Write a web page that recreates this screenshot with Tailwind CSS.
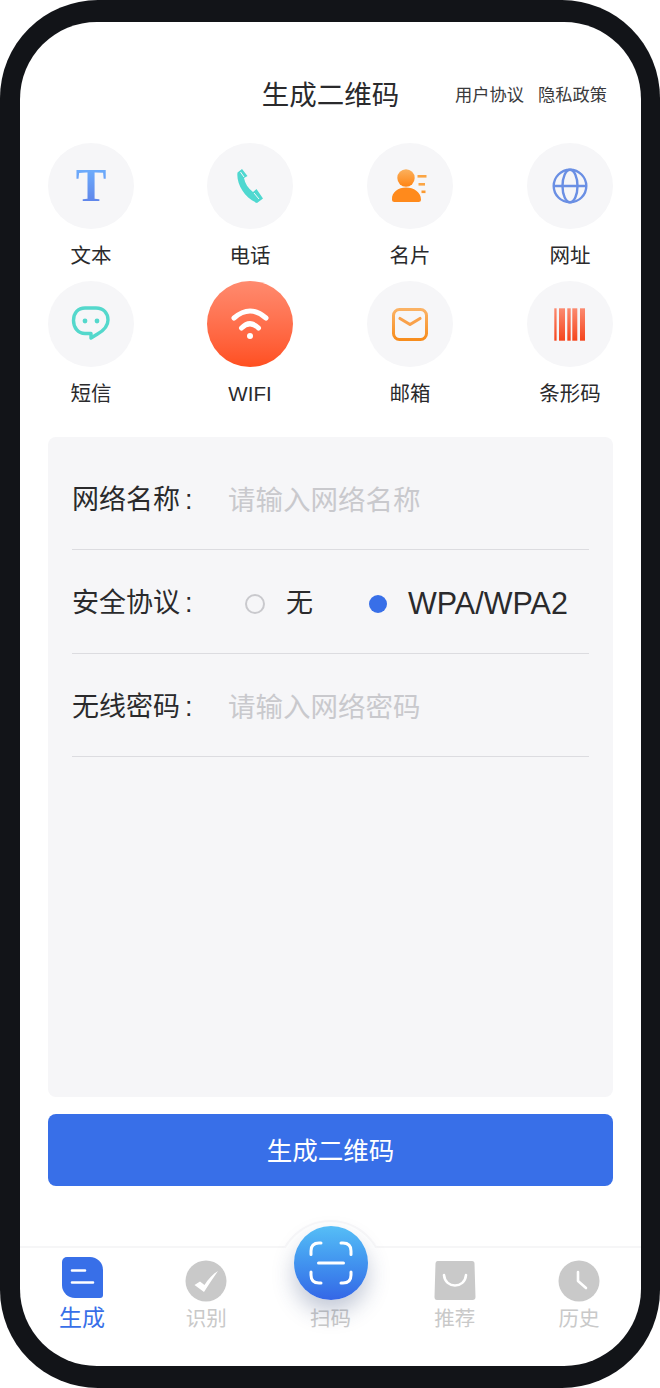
<!DOCTYPE html>
<html lang="zh-CN">
<head>
  <meta charset="UTF-8">
  <meta name="viewport" content="width=device-width, initial-scale=1">
  <title>生成二维码</title>
  <script src="https://cdn.jsdelivr.net/npm/@tailwindcss/browser@4"></script>
</head>
<body class="bg-white font-['Liberation_Sans','Noto_Sans_CJK_SC',sans-serif] text-[#2a2a2c]">

  <!-- 手机外框 -->
  <div class="w-[660px] h-[1388px] rounded-[98px] bg-[#121418] pt-[22px] pb-[22px] pl-[20px] pr-[19px]">
    <div class="h-full rounded-[77px] bg-white overflow-hidden flex flex-col">

      <!-- 标题栏 -->
      <div class="h-[121px] shrink-0 grid grid-cols-[1fr_auto_1fr] items-start pt-[57px]">
        <div></div>
        <div class="text-[27.5px] leading-[34px]">生成二维码</div>
        <div class="flex justify-end gap-[14px] pr-[34px] pt-[4px] text-[17.25px] leading-[24px] text-[#3a3a3c]">
          <span>用户协议</span>
          <span>隐私政策</span>
        </div>
      </div>

      <!-- 类型图标 -->
      <div class="px-[28px] shrink-0 flex flex-col">
        <div class="flex justify-between">
          <div class="w-[86px] flex flex-col items-center">
            <div class="w-[86px] h-[86px] rounded-full bg-[#f6f6f8] flex items-center justify-center">
              <span class="font-['Liberation_Serif',serif] font-bold text-[46px] leading-[46px] bg-gradient-to-b from-[#70b4ff] to-[#5c7ce6] bg-clip-text text-transparent">T</span>
            </div>
            <div class="h-[52px] flex items-center text-[20.5px] pt-[3px]">文本</div>
          </div>
          <div class="w-[86px] -ml-[1px] flex flex-col items-center">
            <div class="w-[86px] h-[86px] rounded-full bg-[#f6f6f8]">
              <svg width="86" height="86" viewBox="0 0 86 86">
                <path d="M35 26 L30.5 29.5 C29 40 37 55 50 60 L56 55.5 L49.5 46 L46 49 C41 45.5 38 40.5 37 35 L40.5 33 Z" fill="#4fd8d0"/>
                <path d="M33.5 29 L37 34 M47 50 L52 56" stroke="#f6f6f8" stroke-width="1"/>
              </svg>
            </div>
            <div class="h-[52px] flex items-center text-[20.5px] pt-[3px]">电话</div>
          </div>
          <div class="w-[86px] flex flex-col items-center">
            <div class="w-[86px] h-[86px] rounded-full bg-[#f6f6f8]">
              <svg width="86" height="86" viewBox="0 0 86 86">
                <defs>
                  <linearGradient id="orangeCard" x1="0" y1="0" x2="0" y2="1">
                    <stop offset="0" stop-color="#fbb15e"/>
                    <stop offset="1" stop-color="#ff8413"/>
                  </linearGradient>
                </defs>
                <circle cx="39" cy="35" r="8.700" fill="url(#orangeCard)"/>
                <path d="M25 56.500 C24.500 49 31.500 44.500 39 44.500 C46.500 44.500 54 49 54 56.500 Q54 59 51.500 59 H27.500 Q25 59 25 56.500 Z" fill="#ff8a1c"/>
                <rect x="50.500" y="32" width="9" height="2.600" fill="#fba544"/>
                <rect x="51.500" y="40" width="6.500" height="2.600" fill="#fba544"/>
                <rect x="54.500" y="47.500" width="4" height="2.600" fill="#fb9a30"/>
              </svg>
            </div>
            <div class="h-[52px] flex items-center text-[20.5px] pt-[3px]">名片</div>
          </div>
          <div class="w-[86px] flex flex-col items-center">
            <div class="w-[86px] h-[86px] rounded-full bg-[#f6f6f8]">
              <svg width="86" height="86" viewBox="0 0 86 86" fill="none" stroke="#6a8fe4" stroke-width="2.400">
                <circle cx="43" cy="43" r="16.300"/>
                <ellipse cx="43" cy="43" rx="7.500" ry="16.300"/>
                <path d="M27 43 H59"/>
              </svg>
            </div>
            <div class="h-[52px] flex items-center text-[20.5px] pt-[3px]">网址</div>
          </div>
        </div>

        <div class="flex justify-between">
          <div class="w-[86px] flex flex-col items-center">
            <div class="w-[86px] h-[86px] rounded-full bg-[#f6f6f8]">
              <svg width="86" height="86" viewBox="0 0 86 86">
                <path d="M37 27 H48 C55.500 27 60 32 60 39 C60 46.500 54 50.500 49.500 53 L43 57 V52.500 H37 C30 52.500 25.500 46.500 25.500 39.500 C25.500 32 30 27 37 27 Z" fill="none" stroke="#54d8cc" stroke-width="3.400" stroke-linejoin="round"/>
                <circle cx="37" cy="40" r="2.400" fill="#54d8cc"/>
                <circle cx="49" cy="40" r="2.400" fill="#54d8cc"/>
              </svg>
            </div>
            <div class="h-[52px] flex items-center text-[20.5px] pt-[3px]">短信</div>
          </div>
          <div class="w-[86px] -ml-[1px] flex flex-col items-center">
            <div class="w-[86px] h-[86px] rounded-full bg-gradient-to-b from-[#ff8a6e] to-[#ff4f1f]">
              <svg width="86" height="86" viewBox="0 0 86 86" fill="none" stroke="#ffffff" stroke-width="5" stroke-linecap="round">
                <path d="M27 37 Q43 23 59 37"/>
                <path d="M34.500 47 Q43 38.500 51.500 47"/>
                <circle cx="43" cy="55" r="3" fill="#ffffff" stroke="none"/>
              </svg>
            </div>
            <div class="h-[52px] flex items-center text-[20.5px] pt-[3px]">WIFI</div>
          </div>
          <div class="w-[86px] flex flex-col items-center">
            <div class="w-[86px] h-[86px] rounded-full bg-[#f6f6f8]">
              <svg width="86" height="86" viewBox="0 0 86 86" fill="none">
                <defs>
                  <linearGradient id="orangeMail" x1="0" y1="0" x2="0" y2="1">
                    <stop offset="0" stop-color="#fbb264"/>
                    <stop offset="1" stop-color="#f78d1e"/>
                  </linearGradient>
                </defs>
                <rect x="26.500" y="28.500" width="33" height="30" rx="6" stroke="url(#orangeMail)" stroke-width="3"/>
                <path d="M33 37.500 L43 43.500 L53 37.500" stroke="#f9a14a" stroke-width="3.200" stroke-linecap="round" stroke-linejoin="round"/>
              </svg>
            </div>
            <div class="h-[52px] flex items-center text-[20.5px] pt-[3px]">邮箱</div>
          </div>
          <div class="w-[86px] flex flex-col items-center">
            <div class="w-[86px] h-[86px] rounded-full bg-[#f6f6f8]">
              <svg width="86" height="86" viewBox="0 0 86 86">
                <defs>
                  <linearGradient id="redBars" x1="0" y1="0" x2="0" y2="1">
                    <stop offset="0" stop-color="#fb8a70"/>
                    <stop offset="1" stop-color="#f5451d"/>
                  </linearGradient>
                </defs>
                <g fill="url(#redBars)">
                  <rect x="27.300" y="27.300" width="2.300" height="32.400"/>
                  <rect x="32" y="27.300" width="6" height="32.400"/>
                  <rect x="40.300" y="27.300" width="3.400" height="32.400"/>
                  <rect x="45.300" y="27.300" width="5" height="32.400"/>
                  <rect x="53" y="27.300" width="5" height="32.400"/>
                </g>
              </svg>
            </div>
            <div class="h-[52px] flex items-center text-[20.5px] pt-[3px]">条形码</div>
          </div>
        </div>
      </div>

      <!-- 表单 -->
      <div class="mx-[28px] mt-[18px] h-[660px] shrink-0 rounded-[8px] bg-[#f6f6f8] px-[24px] pt-[9px] text-[27px]">
        <div class="h-[104px] flex items-center border-b border-[#dcdce0] pt-[6px]">
          <div class="w-[156px] flex">网络名称<span class="ml-[5px]">:</span></div>
          <div class="text-[#c9c9cd] text-[27.5px]">请输入网络名称</div>
        </div>
        <div class="h-[104px] flex items-center border-b border-[#dcdce0] pt-[4px]">
          <div class="w-[156px] flex">安全协议<span class="ml-[5px]">:</span></div>
          <div class="ml-[17px] w-[20px] h-[20px] rounded-full border-2 border-[#c9c9cd]"></div>
          <div class="ml-[21px]">无</div>
          <div class="ml-[56px] w-[18px] h-[18px] rounded-full bg-[#386fe8]"></div>
          <div class="ml-[21px] text-[30.5px]">WPA/WPA2</div>
        </div>
        <div class="h-[103px] flex items-center border-b border-[#dcdce0] pt-[5px]">
          <div class="w-[156px] flex">无线密码<span class="ml-[5px]">:</span></div>
          <div class="text-[#c9c9cd] text-[27.5px]">请输入网络密码</div>
        </div>
      </div>

      <!-- 按钮 -->
      <div class="mx-[28px] mt-[17px] h-[72px] shrink-0 rounded-[8px] bg-[#386fe8] flex items-center justify-center pt-[3px] text-white text-[25.5px]">生成二维码</div>

      <div class="flex-1"></div>

      <!-- 底部导航 -->
      <div class="relative h-[120px] shrink-0 border-t-2 border-[#f6f6f7] grid grid-cols-5 pt-[9px]">
        <div class="flex flex-col items-center">
          <svg width="42" height="42" viewBox="0 0 42 42">
            <path d="M6 0 H29 A13 13 0 0 1 42 13 V38 A3 3 0 0 1 39 41 H14 A13 13 0 0 1 1 28 V5 A5 5 0 0 1 6 0 Z" fill="#386fe8"/>
            <path d="M11 13.500 H24 M11 25.500 H32" stroke="#ffffff" stroke-width="2.600" stroke-linecap="round"/>
          </svg>
          <div class="text-[23px] leading-[30px] mt-[4px] text-[#386fe8]">生成</div>
        </div>
        <div class="flex flex-col items-center">
          <svg class="mt-[3px]" width="42" height="42" viewBox="0 0 42 42">
            <circle cx="21" cy="21" r="20.500" fill="#c9c9c9"/>
            <path d="M9.500 25 L15 21.500 L19.500 25 C23 19 28 14 33 11 C28 18 23.500 25 19 32 Z" fill="#ffffff"/>
          </svg>
          <div class="text-[20.5px] leading-[30px] mt-[2px] text-[#c9c9c9]">识别</div>
        </div>
        <div class="flex flex-col items-center">
          <div class="h-[45px]"></div>
          <div class="text-[20.5px] leading-[30px] mt-[2px] text-[#c9c9c9]">扫码</div>
        </div>
        <div class="flex flex-col items-center">
          <svg class="mt-[3px]" width="42" height="42" viewBox="0 0 42 42">
            <path d="M3.500 1 H38 Q40.500 1 40.500 3.500 L41.500 37 Q41.500 40 38.500 40 H3 Q0.500 40 0.500 37 L1.500 3.500 Q1.500 1 3.500 1 Z" fill="#c9c9c9"/>
            <path d="M10 15 C11 29 31 29 32 15" fill="none" stroke="#ffffff" stroke-width="2.600" stroke-linecap="round"/>
          </svg>
          <div class="text-[20.5px] leading-[30px] mt-[2px] text-[#c9c9c9]">推荐</div>
        </div>
        <div class="flex flex-col items-center">
          <svg class="mt-[3px]" width="42" height="42" viewBox="0 0 42 42">
            <circle cx="21" cy="21" r="20.500" fill="#c9c9c9"/>
            <path d="M20 12 V21 L28 28" fill="none" stroke="#ffffff" stroke-width="2.600" stroke-linecap="round" stroke-linejoin="round"/>
          </svg>
          <div class="text-[20.5px] leading-[30px] mt-[2px] text-[#c9c9c9]">历史</div>
        </div>

        <!-- 扫码按钮 -->
        <div class="absolute left-[257px] top-[-28px] w-[107px] h-[28px] overflow-hidden">
          <div class="w-[107px] h-[107px] rounded-full bg-white border-2 border-[#f8f8f9]"></div>
        </div>
        <div class="absolute left-[274px] top-[-22px] w-[74px] h-[74px] rounded-full bg-gradient-to-b from-[#56bef6] to-[#3566e6] shadow-[0_12px_22px_rgba(40,60,110,0.28)]">
          <svg width="74" height="74" viewBox="0 0 74 74" fill="none" stroke="#ffffff" stroke-width="3" stroke-linecap="round">
            <path d="M27 17 H25 Q17 17 17 25 V28.500"/>
            <path d="M47 17 H49 Q57 17 57 25 V28.500"/>
            <path d="M17 46 V49 Q17 57 25 57 H27"/>
            <path d="M57 46 V49 Q57 57 49 57 H47"/>
            <path d="M24.500 37 H49.500"/>
          </svg>
        </div>
      </div>
    </div>
  </div>

</body>
</html>
